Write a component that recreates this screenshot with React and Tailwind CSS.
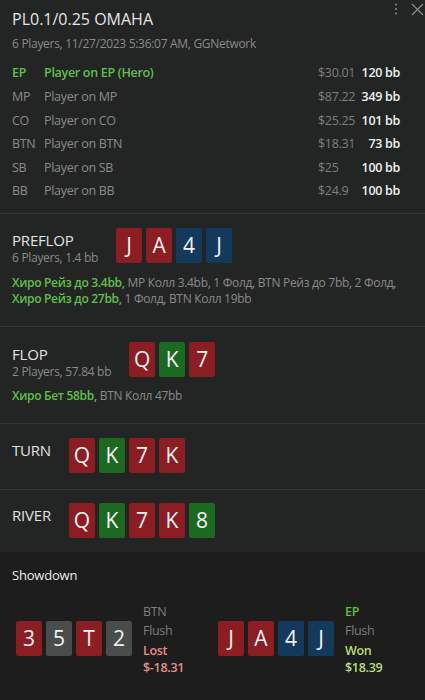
import React from "react";

const COLORS = {
  r: "bg-[#8c1d22]",
  b: "bg-[#133a5c]",
  g: "bg-[#1c6a21]",
  k: "bg-[#4a4b4b]",
};

function Card({ rank, c }) {
  return (
    <div
      className={`w-[26px] h-[35px] rounded-[2px] flex items-center justify-center text-[21px] leading-none text-[#f2f2f2] ${COLORS[c]}`}
    >
      {rank}
    </div>
  );
}

function Cards({ list }) {
  return (
    <div className="flex gap-[4px]">
      {list.map(([r, c], i) => (
        <Card key={i} rank={r} c={c} />
      ))}
    </div>
  );
}

const players = [
  ["EP", "Player on EP (Hero)", "$30.01", "120 bb", true],
  ["MP", "Player on MP", "$87.22", "349 bb"],
  ["CO", "Player on CO", "$25.25", "101 bb"],
  ["BTN", "Player on BTN", "$18.31", "73 bb"],
  ["SB", "Player on SB", "$25", "100 bb"],
  ["BB", "Player on BB", "$24.9", "100 bb"],
];

function Street({ title, sub, cards, children, pt, pb }) {
  return (
    <div className={`border-t border-[#363837] px-[12px] ${pt} ${pb}`}>
      <div className="flex gap-[18px] h-[35px]">
        <div className="pt-[2px]">
          <div className="text-[15px] leading-[20px] text-[#e2e2e2] tracking-[-0.2px]">{title}</div>
          {sub && (
            <div className="text-[12px] leading-[16px] text-[#8a8a8a] tracking-[-0.3px] whitespace-nowrap">
              {sub}
            </div>
          )}
        </div>
        <Cards list={cards} />
      </div>
      {children}
    </div>
  );
}

export default function App() {
  const G = "text-[#62bf4b] font-semibold";
  return (
    <div
      className="w-[425px] h-[700px] bg-[#232524] relative overflow-hidden flex flex-col"
      style={{ fontFamily: '"Open Sans", "Noto Sans", sans-serif' }}
    >
      <div className="absolute top-[3px] right-[27px]">
        <svg width="4" height="12" viewBox="0 0 4 12">
          <circle cx="2" cy="1.5" r="1" fill="#8a8a8a" />
          <circle cx="2" cy="6" r="1" fill="#8a8a8a" />
          <circle cx="2" cy="10.5" r="1" fill="#8a8a8a" />
        </svg>
      </div>
      <div className="absolute top-[3px] right-[1px]">
        <svg width="13" height="13" viewBox="0 0 13 13">
          <path d="M1 1 L12 12 M12 1 L1 12" stroke="#8f8f8f" strokeWidth="1.1" fill="none" />
        </svg>
      </div>

      <div className="px-[12px] pt-[8px] pb-[9px]">
        <div className="text-[16px] leading-[22px] text-[#e4e4e4]">PL0.1/0.25 OMAHA</div>
        <div className="mt-[6px] text-[12px] leading-[16px] text-[#8a8a8a] tracking-[-0.3px]">
          6 Players, 11/27/2023 5:36:07 AM, GGNetwork
        </div>
        <div className="mt-[10px] flex flex-col">
          {players.map(([pos, name, amt, bb, hero]) => (
            <div
              key={pos}
              className="h-[23.6px] flex items-center text-[12.5px] tracking-[-0.3px] whitespace-nowrap"
            >
              <div className={`w-[32px] ${hero ? G : "text-[#8a8a8a]"}`}>{pos}</div>
              <div className={`flex-1 ${hero ? G : "text-[#8a8a8a]"}`}>{name}</div>
              <div className="w-[40px] text-[#7e7e7e]">{amt}</div>
              <div className="w-[42px] text-right font-semibold text-[#f0f0f0]">{bb}</div>
              <div className="w-[13px]" />
            </div>
          ))}
        </div>
      </div>

      <Street
        title="PREFLOP"
        sub="6 Players, 1.4 bb"
        cards={[["J", "r"], ["A", "r"], ["4", "b"], ["J", "b"]]}
        pt="pt-[14px]"
        pb="pb-[19px]"
      >
        <div className="mt-[12px] text-[12px] leading-[16px] text-[#8a8a8a] tracking-[-0.3px]">
          <div className="whitespace-nowrap">
            <span className={G}>Хиро Рейз до 3.4bb,</span> MP Колл 3.4bb, 1 Фолд, BTN Рейз до 7bb, 2 Фолд,
          </div>
          <div className="whitespace-nowrap">
            <span className={G}>Хиро Рейз до 27bb,</span> 1 Фолд, BTN Колл 19bb
          </div>
        </div>
      </Street>

      <Street
        title="FLOP"
        sub="2 Players, 57.84 bb"
        cards={[["Q", "r"], ["K", "g"], ["7", "r"]]}
        pt="pt-[15px]"
        pb="pb-[19px]"
      >
        <div className="mt-[11px] text-[12px] leading-[16px] text-[#8a8a8a] tracking-[-0.3px]">
          <span className={G}>Хиро Бет 58bb,</span> BTN Колл 47bb
        </div>
      </Street>

      <Street
        title="TURN"
        cards={[["Q", "r"], ["K", "g"], ["7", "r"], ["K", "r"]]}
        pt="pt-[14px]"
        pb="pb-[16px]"
      />

      <Street
        title="RIVER"
        cards={[["Q", "r"], ["K", "g"], ["7", "r"], ["K", "r"], ["8", "g"]]}
        pt="pt-[13px]"
        pb="pb-[14px]"
      />

      <div className="flex-1 bg-[#1c1d1c] px-[12px] pt-[14px]">
        <div className="text-[13px] leading-[18px] font-medium text-[#ececec] tracking-[-0.2px]">Showdown</div>
        <div className="mt-[18px] flex pl-[4px]">
          <div className="w-[202px] flex items-center gap-[11px]">
            <Cards list={[["3", "r"], ["5", "k"], ["T", "r"], ["2", "k"]]} />
            <div className="flex flex-col text-[12.5px] tracking-[-0.3px]">
              <div className="leading-[19px] text-[#7e7e7e]">BTN</div>
              <div className="leading-[20px] text-[#7e7e7e]">Flush</div>
              <div className="leading-[19px] font-semibold text-[#e48f8a]">Lost</div>
              <div className="leading-[16px] font-semibold text-[#e48f8a]">$-18.31</div>
            </div>
          </div>
          <div className="flex items-center gap-[11px]">
            <Cards list={[["J", "r"], ["A", "r"], ["4", "b"], ["J", "b"]]} />
            <div className="flex flex-col text-[12.5px] tracking-[-0.3px]">
              <div className="leading-[19px] font-semibold text-[#62bf4b]">EP</div>
              <div className="leading-[20px] text-[#7e7e7e]">Flush</div>
              <div className="leading-[19px] font-semibold text-[#b8df72]">Won</div>
              <div className="leading-[16px] font-semibold text-[#b8df72]">$18.39</div>
            </div>
          </div>
        </div>
      </div>
    </div>
  );
}
